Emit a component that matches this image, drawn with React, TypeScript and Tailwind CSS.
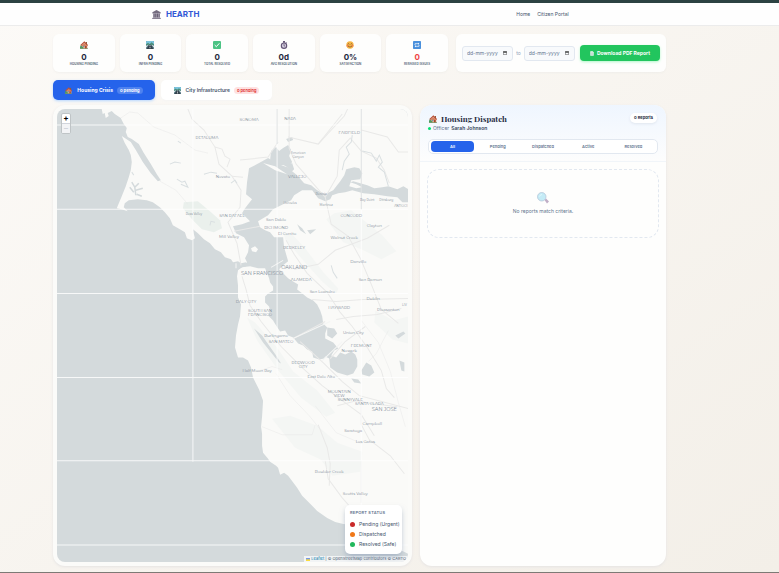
import { useState } from 'react'
import type { ReactNode } from 'react'

type IconProps = { className?: string }

function HouseIcon({ className }: IconProps) {
    return (
        <svg viewBox="0 0 24 24" className={className} aria-hidden="true">
            <path d="M17 3h4v8h-4z" fill="#8d5a3c" />
            <path d="M4 11h18v12H4z" fill="#e2a988" />
            <path d="M13 1 1 12l2 3L13 6l9 9 2-3z" fill="#b9533b" />
            <path d="M13 6 5 14v2h16v-2z" fill="#d9805c" />
            <path d="M15 15h5v8h-5z" fill="#a8482f" />
            <path d="M9 14h4v4H9z" fill="#6a96b8" />
            <path d="M0 23v-6l3-4 4 4 3 2v4z" fill="#4d9a63" />
            <path d="M0 22h24v2H0z" fill="#78946a" />
        </svg>
    )
}

function RoadIcon({ className }: IconProps) {
    return (
        <svg viewBox="0 0 24 24" className={className} aria-hidden="true">
            <rect width="24" height="24" rx="2" fill="#4d6f7c" />
            <path d="M0 2q0-2 2-2h20q2 0 2 2v7H0z" fill="#7cc4dc" />
            <path d="m0 10 6-5 5 4 6-5 7 6v3H0z" fill="#4f8f7c" />
            <path d="M9 11h6l7 13H2z" fill="#35424c" />
            <path d="M11 12h2v3h-2zm0 5h2v5h-2z" fill="#fff" />
            <path d="m0 14 8-3-8 9zm24 0-8-3 8 9z" fill="#dfe9ec" />
        </svg>
    )
}

function CheckIcon({ className }: IconProps) {
    return (
        <svg viewBox="0 0 24 24" className={className} aria-hidden="true">
            <rect width="24" height="24" rx="3" fill="#4cc384" />
            <path d="m5 12 5 5 9-10" fill="none" stroke="#fff" strokeWidth="3" />
        </svg>
    )
}

function StopwatchIcon({ className }: IconProps) {
    return (
        <svg viewBox="0 0 24 24" className={className} aria-hidden="true">
            <path d="M9 0h6v5H9zM18 3l3 3-3 2-2-2z" fill="#665778" />
            <circle cx="12" cy="14" r="8" fill="#d5cfe0" stroke="#665778" strokeWidth="3.500" />
            <path d="M12 9v6h3" fill="none" stroke="#594a6b" strokeWidth="2" />
        </svg>
    )
}

function SmileIcon({ className }: IconProps) {
    return (
        <svg viewBox="0 0 24 24" className={className} aria-hidden="true">
            <circle cx="12" cy="12" r="11" fill="#f6b545" />
            <circle cx="4.500" cy="14" r="3" fill="#f0804d" />
            <circle cx="19.500" cy="14" r="3" fill="#f0804d" />
            <path d="M5 10q2-4 5 0m4 0q2-4 5 0M6 15q6 7 12 0" fill="none" stroke="#6d4326" strokeWidth="2" />
        </svg>
    )
}

function RepeatIcon({ className }: IconProps) {
    return (
        <svg viewBox="0 0 24 24" className={className} aria-hidden="true">
            <rect width="24" height="24" rx="2" fill="#4a90dc" />
            <path d="M6 12V8h10M18 12v4H8" fill="none" stroke="#fff" strokeWidth="2" />
            <path d="m15 5 4 3-4 3zM9 13l-4 3 4 3z" fill="#fff" />
        </svg>
    )
}

function BankIcon({ className }: IconProps) {
    return (
        <svg viewBox="0 0 24 24" className={className} aria-hidden="true">
            <path d="m12 0 11 6v3H1V6z" fill="#756d80" />
            <path d="M3 9h18v11H3z" fill="#b5aebd" />
            <path d="M4 9h3v11H4zm4.500 0h3v11h-3zm4.500 0h3v11h-3zm4.500 0h3v11h-3z" fill="#6b6276" />
            <path d="M2 20h20v2h2v2H0v-2h2z" fill="#8a8294" />
        </svg>
    )
}

function SearchEmoji({ className }: IconProps) {
    return (
        <svg viewBox="0 0 24 24" className={className} aria-hidden="true">
            <path d="m15 16 3-3 6 6-4 4z" fill="#c0aec6" />
            <circle cx="9.500" cy="9.500" r="8.500" fill="#c4ebf6" stroke="#b4c6d8" strokeWidth="1.500" />
            <path d="M5 9q1-4 5-4" fill="none" stroke="#e9f9fd" strokeWidth="1.500" />
        </svg>
    )
}

function CalendarIcon({ className }: IconProps) {
    return (
        <svg viewBox="0 0 12 12" className={className} aria-hidden="true">
            <path d="M1 2h10v9H1zM3 0v3M9 0v3" fill="none" stroke="#333" strokeWidth="1.500" />
            <path d="M1 2h10v3H1z" fill="#333" />
        </svg>
    )
}

function FileIcon({ className }: IconProps) {
    return (
        <svg viewBox="0 0 12 14" className={className} aria-hidden="true">
            <path d="M1 0h7l3 3v11H1z" fill="#f3f6fa" />
            <path d="M3 5h6M3 8h6M3 11h6" stroke="#67a883" strokeWidth="1" />
        </svg>
    )
}

const stats: { label: string; value: string; icon: ReactNode; alert?: boolean }[] = [
    { label: 'Housing Pending', value: '0', icon: <HouseIcon className="size-2" /> },
    { label: 'Infra Pending', value: '0', icon: <RoadIcon className="size-2" /> },
    { label: 'Total Resolved', value: '0', icon: <CheckIcon className="size-2" /> },
    { label: 'Avg Resolution', value: '0d', icon: <StopwatchIcon className="size-2" /> },
    { label: 'Satisfaction', value: '0%', icon: <SmileIcon className="size-2" /> },
    { label: 'Reraised Issues', value: '0', icon: <RepeatIcon className="size-2" />, alert: true },
]

const filters = ['All', 'Pending', 'Dispatched', 'Active', 'Resolved']

const legend = [
    { label: 'Pending (Urgent)', dot: 'bg-[#c92a2a]' },
    { label: 'Dispatched', dot: 'bg-[#f07818]' },
    { label: 'Resolved (Safe)', dot: 'bg-[#22b85c]' },
]

// name, x, y, font size
const places: [string, number, number, number][] = [
    ['SONOMA', 249, 121, 4],
    ['NAPA', 290, 120, 4],
    ['PETALUMA', 207, 139, 4],
    ['FAIRFIELD', 349, 134, 4],
    ['American', 298, 154, 3],
    ['Canyon', 298, 158, 3],
    ['Novato', 223, 178, 4],
    ['VALLEJO', 297, 178, 4],
    ['Benicia', 321, 195, 3],
    ['Hercules', 290, 204, 3],
    ['Martinez', 326, 206, 3],
    ['Bay Point', 367, 201, 3],
    ['Pittsburg', 386, 201, 3],
    ['ANTIOCH', 401, 207, 3],
    ['Ross Valley', 194, 215, 3],
    ['SAN RAFAEL', 232, 217, 4],
    ['CONCORD', 351, 217, 4],
    ['San Pablo', 276, 221, 4],
    ['RICHMOND', 276, 229, 4],
    ['Clayton', 374, 227, 4],
    ['El Cerrito', 287, 235, 4],
    ['Mill Valley', 229, 238, 4],
    ['Walnut Creek', 344, 239, 4],
    ['BERKELEY', 294, 249, 4],
    ['Danville', 358, 263, 4],
    ['OAKLAND', 294, 269, 5],
    ['SAN FRANCISCO', 262, 275, 5],
    ['San Ramon', 370, 281, 4],
    ['ALAMEDA', 301, 281, 4],
    ['San Leandro', 322, 293, 4],
    ['Dublin', 373, 300, 4],
    ['DALY CITY', 246, 303, 4],
    ['HAYWARD', 339, 309, 4],
    ['Pleasanton', 388, 311, 4],
    ['LIV', 404, 306, 3],
    ['SOUTH SAN', 260, 312, 4],
    ['FRANCISCO', 260, 316, 4],
    ['Union City', 353, 334, 4],
    ['Burlingame', 276, 337, 4],
    ['SAN MATEO', 281, 342, 4],
    ['FREMONT', 361, 346, 4],
    ['Newark', 349, 351, 4],
    ['REDWOOD', 303, 363, 4],
    ['CITY', 303, 367, 4],
    ['Half Moon Bay', 257, 371, 4],
    ['East Palo Alto', 321, 377, 4],
    ['MOUNTAIN', 339, 392, 4],
    ['VIEW', 339, 396, 4],
    ['SUNNYVALE', 350, 400, 4],
    ['SANTA CLARA', 369, 404, 4],
    ['SAN JOSE', 384, 410, 5],
    ['Campbell', 372, 424, 4],
    ['Saratoga', 353, 431, 4],
    ['Los Gatos', 365, 442, 4],
    ['Boulder Creek', 329, 472, 4],
    ['Scotts Valley', 355, 494, 4],
]

function CoastMap() {
    return (
        <svg viewBox="57 109 351 452" preserveAspectRatio="xMidYMid slice" className="absolute inset-0 size-full" role="img" aria-label="Map of the Bay Area">
            <path d="M57 109h351v452H57z" fill="#d4dadc" />

            {/* mainland */}
            <path
                d="M102 109 103 114 105 113 106 118 109 116 108 113 112 111 115 114 121 118 124 124 127 128 126 132 128 137 132 139 139 144 144 153 151 164 157 174 161 180 158 181 151 173 143 162 136 150 131 142 125 138 122 136 125 143 129 150 131 155 132 162 131 170 129 177 126 186 122 196 117 208 122 209 128 211 124 207 125 203 129 200 138 199 147 200 153 202 160 207 165 212 170 218 173 225 180 229 185 232 187 238 192 240 195 238 194 234 193 229 198 233 204 239 210 243 215 249 221 252 225 257 231 259 233 262 238 261 241 263 246 262 246 266 242 267 238 270 237 276 238 285 238 297 241 304 240 316 238 324 236 335 235 347 238 357 243 357 248 360 251 367 253 377 259 389 263 400 262 416 261 426 262 433 262 445 263 452 268 458 270 461 276 465 278 467 280 474 284 472 288 475 297 487 302 495 310 503 317 510 327 517 335 521 343 523 357 524 371 527 388 537 398 548 408 553V109z"
                fill="#fafaf8"
            />

            {/* parkland */}
            <g fill="#f4f6f4">
                <path d="m184 202 14-1 12 10 10 9 2 8-8 4-12-3-9-9-10-12z" fill="#eaf0ec" />
                <path d="m283 232 9 2 13 14 18 24 15 16-2 5-14-12-19-21-18-21z" />
                <path d="m326 219 8-6 17-3 10 8 21 17 14 16-15 8-20-10-18-7z" />
                <path d="m247 317 8 5 22 25 16 24 24 19 18 22-9 4-25-19-22-26-22-31z" />
                <path d="m272 418 18-3 27 10 20 17 25 9-2 20-28 4-11-16-26-12z" />
                <path d="m375 310 18 10 15-4v27l-16-4-18-17z" />
            </g>

            {/* bay */}
            <path
                d="M236 270 242 267 250 266 258 268 265 268 267 273 269 278 270 282 273 286 273 290 268 293 265 296 265 302 269 306 270 310 268 315 273 320 276 325 280 331 285 330 288 335 293 337 298 343 303 345 307 349 312 351 313 357 319 359 324 358 325 356 329 358 330 367 337 372 347 375 353 373 357 366 357 359 355 354 351 351 345 354 340 352 336 357 331 355 334 350 338 348 333 342 325 338 325 333 327 327 323 323 322 316 320 310 317 304 313 300 307 297 301 292 297 289 298 284 293 281 288 278 283 273 279 269 283 265 288 261 286 254 284 247 283 237 274 237 270 232 265 230 260 227 258 221 263 218 268 215 273 209 283 204 291 200 294 195 302 190 312 190 318 198 325 201 330 199 332 195 338 193 345 192 352 190 363 193 374 194 387 196 397 197 402 202 408 202V189l-5-3-6 3-9-3-6 1-8 1-7-3-14-4-3 1 6 2 6 3-6 1-7-2 2-6 9-1 2-6-3-5-5-1-8 2-2 6-4 6-7 9-8 4-8-4-6-5-7-2-7-8-10-8-9-3-10-6-9 5-10 5-2 14-1 12 6 5-7 9-3 5 8 8-8 3-9 2 3 7 8 4 5 8-1 7-3 6 2 4z"
                fill="#d4dadc"
            />
            <g fill="#d4dadc">
                <path d="m271 151 5-4 3 4 4-3 5-3 3 5-2 6 3 6-4 5-5-2-8 1-5-6z" />
                <path d="m286 166 6-3 2 6-3 3zM286 139l6-2 1 3-5 2z" />
                <path d="m327 327 7 1 3 5-5 5-5-3zM361 370l5-8 5 3 3 7-5 4-7-2zM351 378l7 1 3 4-7-1zM399 360l5 2v9l-3-1zM395 335l8-4 2 2-7 5z" />
                <path d="m254 328 8 7 14 20 5 8-2-1-16-20zM297 224l5 4 4 6-6-4zM307 230l9-1-6 5z" />
            </g>
            <path d="m132 182 3 5 1 8M135 187l4-4M136 190l7-2M134 192l-4-5M137 194l5 2" fill="none" stroke="#d4dadc" strokeWidth="1.500" />
            <path d="m251 248 4-2 3 3-2 3-4-1zM284 273l12 4 5 6-8-3zM263 163l12 3 12 8-12-4z" fill="#fafaf8" />

            {/* roads and bridges */}
            <g fill="none" stroke="#e9e9e8" strokeWidth="1">
                <path d="M188 109l4 10 12 11 11 17 4 17 13 12 9 14-1 17-12 15 9 21 4 22M215 147l7 2 3 7 5 3-3 8M240 160l28-3 10-15M289 109v39l7 16 21 24 8 9 6 27 17 12 12 22 11 26 10 25 17 14M288 137l30 7 26-28 9-19" />
                <path d="M325 197l12-21 2-26 11-12 11 13 15 7 8 12 5 13M361 130l26 7 11 15h10M318 144l24-30M232 176l11 1M260 226l-26 5M286 240l8 14 13 19 20 19 13 20 12 14 15 21 14 23 5 18 8 9M294 269l24-5 17-14 32-12 22-13M312 299l24 2 27-2 45-1M336 319l17-3 24-2 24-6M242 276l4 13 4 16 11 16 20 25 21 21 20 18 20 15 19 14 13 21M300 341l24 22 18 18 17 14 27 7 22 6M293 338l32-17M330 358l15-17 20-15M337 405l19-5 17 3 24 3M361 400v24l8 15 21 16 14 18M318 424l9 23 3 16-1 22M325 460l3 18 14 19 16 18M361 460v42" />
                <path d="M121 118l9-6 8 1 16 14 21 8 20 15 13 3M160 181l16 9 12 14M361 320l17 22 12 29 8 31 7 24M388 330l-12 23-8 8M276 373l14 22 19 20 13 16M315 405l21 27 26 11M257 371l15-5 10 3M262 426l20 8h30l3-10" strokeWidth="0.500" />
            </g>
            <g fill="none" stroke="#d9dfe1" strokeWidth="1">
                <path d="M342 170l2-9 5-7-3-7 5-5 1-7M362 151l9 2 5 8 3-6 3 7-4 5 6 5 4 14M231 183l4-3 2 3M181 143l-3-2M170 164l5-2 6 1M204 174l7-2 6 1M177 179l5 3 3-1 3 6-7-3M132 172l2 3M331 265l2 7 4 6M210 225l1-4 4 1" />
            </g>
            <path d="M293 338l37-17M236 263v5M271 267l12-7M322 360l20-19" fill="none" stroke="#f4f5f4" strokeWidth="1" />

            {/* tile seams */}
            <path d="M193 109v352M277 109v270M361 209v340M57 125h351M57 209h351M57 293h351M57 377h351M57 460h351M57 544h351" fill="none" stroke="#fff" strokeWidth="1" opacity="0.800" />
            <path d="M361 109v100M277 109v35" stroke="#dfe2e3" strokeWidth="1" />

            <g fill="#7c8996" textAnchor="middle" fontFamily='Montserrat, "Open Sans", sans-serif'>
                {places.map(([name, x, y, size]) => (
                    <text key={name} x={x} y={y} fontSize={size}>{name}</text>
                ))}
            </g>
        </svg>
    )
}

function DateField({ label }: { label: string }) {
    return (
        <div className="flex h-[15px] min-w-0 flex-1 items-center rounded-[3px] border border-slate-200 bg-slate-50 pr-[5px] pl-1">
            <input type="text" aria-label={label} placeholder="dd-mm-yyyy" className="w-full min-w-0 bg-transparent text-[5px] leading-[8px] text-slate-700 outline-none placeholder:text-slate-500" />
            <CalendarIcon className="size-1 shrink-0" />
        </div>
    )
}

export default function App() {
    const [tab, setTab] = useState('housing')
    const [filter, setFilter] = useState('All')

    return (
        <div className="flex min-h-screen flex-col border-t-3 border-b border-t-[#2c4242] border-b-[#7d7a75] bg-linear-to-br from-[#fcfaf7] to-[#f3efe8] font-['Inter','Liberation_Sans',sans-serif] text-slate-800">
            <header className="flex h-[23px] items-center justify-between border-b border-[#ececec] bg-[#fefefe] pr-[27%] pl-[152px]">
                <a href="#" className="flex items-center gap-[5px] text-[8px] leading-3 font-bold text-[#3157d5]">
                    <BankIcon className="size-[9px]" />
                    HEARTH
                </a>
                <nav className="flex items-center gap-[7px] text-[5px] leading-2 text-slate-600">
                    <a href="#">Home</a>
                    <a href="#">Citizen Portal</a>
                </nav>
            </header>

            <main className="flex flex-1 flex-col pt-2 pr-[113px] pb-[6px] pl-[53px]">
                <div className="flex gap-2">
                    <div className="grid min-w-0 flex-1 grid-cols-6 gap-[5px]">
                        {stats.map((s) => (
                            <div key={s.label} className="flex h-[38px] flex-col items-center rounded-md bg-[#fefefd] pt-[7px] shadow-xs shadow-stone-200/40">
                                {s.icon}
                                <div className={`mt-[3px] text-[8px] leading-[10px] font-bold ${s.alert ? 'text-[#ef4444]' : 'text-slate-800'}`}>{s.value}</div>
                                <div className="text-[3px] leading-[5px] font-semibold whitespace-nowrap text-slate-600 uppercase">{s.label}</div>
                            </div>
                        ))}
                    </div>

                    <div className="flex w-[210px] items-center rounded-md bg-[#fefefd] px-[6px] shadow-xs shadow-stone-200/40">
                        <DateField label="From date" />
                        <span className="px-[3px] text-[5px] leading-2 text-slate-400">to</span>
                        <DateField label="To date" />
                        <button className="ml-[5px] flex h-4 w-20 items-center justify-center gap-[3px] rounded-[4px] bg-[#22c55e] text-[5px] leading-2 font-bold whitespace-nowrap text-white shadow-sm shadow-green-200">
                            <FileIcon className="h-[5px] w-1" />
                            Download PDF Report
                        </button>
                    </div>
                </div>

                <div className="mt-2 flex gap-[6px]">
                    <button
                        onClick={() => setTab('housing')}
                        className={`flex h-5 w-[102px] items-center justify-center rounded-[5px] text-[5px] leading-2 font-bold shadow-sm ${tab === 'housing' ? 'bg-[#2563eb] text-white shadow-blue-200' : 'bg-white text-slate-600 shadow-stone-100'}`}
                    >
                        <HouseIcon className="mr-[5px] size-[7px]" />
                        Housing Crisis
                        <span className={`ml-1 rounded-full px-[3px] text-[4px] leading-[7px] ${tab === 'housing' ? 'bg-[#4f82ef]' : 'bg-blue-100 text-blue-700'}`}>0 pending</span>
                    </button>
                    <button
                        onClick={() => setTab('city')}
                        className={`flex h-5 w-[111px] items-center justify-center rounded-[5px] text-[5px] leading-2 font-semibold shadow-sm ${tab === 'city' ? 'bg-[#2563eb] text-white shadow-blue-200' : 'bg-white text-slate-600 shadow-stone-100'}`}
                    >
                        <RoadIcon className="mr-[5px] size-[7px]" />
                        City Infrastructure
                        <span className="ml-1 rounded-full bg-[#fee2e2] px-[3px] text-[4px] leading-[7px] text-[#dc2626]">0 pending</span>
                    </button>
                </div>

                <div className="mt-[5px] flex flex-1 gap-2">
                    <section className="flex min-w-0 flex-[351] rounded-xl bg-[#fbfbf9] p-1 shadow-sm shadow-stone-200">
                        <div className="relative min-h-[452px] flex-1 overflow-hidden rounded-lg">
                            <CoastMap />
                            <div className="absolute top-1 left-1 flex w-[10px] flex-col overflow-hidden rounded-[2px] border border-[#bfc4c6] bg-white text-[8px] leading-[9px] font-bold text-black">
                                <button aria-label="Zoom in" className="h-[10px] border-b border-gray-300">+</button>
                                <button aria-label="Zoom out" className="h-[9px] bg-gray-100 text-gray-300">−</button>
                            </div>
                            <div className="absolute right-0 bottom-0 flex items-center gap-px bg-white/70 px-[2px] text-[4px] leading-[6px] whitespace-nowrap text-slate-600">
                                <svg viewBox="0 0 12 8" className="h-[3px] w-1" aria-hidden="true">
                                    <path d="M0 0h12v4H0z" fill="#4c7be1" />
                                    <path d="M0 4h12v4H0z" fill="#ffd500" />
                                </svg>
                                <a href="#" className="text-[#0078a8]">Leaflet</a>
                                <span>| © OpenStreetMap contributors © CARTO</span>
                            </div>
                            <div className="absolute right-[6px] bottom-2 w-[57px] rounded-[5px] bg-white px-[5px] py-[5px] shadow-md shadow-slate-400/50">
                                <h2 className="text-[4px] leading-[6px] font-semibold tracking-wider text-slate-500">REPORT STATUS</h2>
                                <ul className="mt-[3px] text-[5px] leading-[10px] text-slate-600">
                                    {legend.map((l) => (
                                        <li key={l.label} className="flex items-center gap-1 whitespace-nowrap">
                                            <span className={`size-[5px] shrink-0 rounded-full ${l.dot}`} />
                                            {l.label}
                                        </li>
                                    ))}
                                </ul>
                            </div>
                        </div>
                    </section>

                    <section className="flex min-w-0 flex-[246] flex-col overflow-hidden rounded-xl bg-[#fefefd] shadow-sm shadow-stone-200">
                        <div className="border-b border-slate-100 bg-linear-to-b from-blue-50 to-[#fdfdfd] px-2 pt-2 pb-[7px]">
                            <div className="flex items-start justify-between">
                                <div>
                                    <h1 className="flex items-center gap-1 pl-px font-['Playfair_Display','Liberation_Serif',serif] text-[8px] leading-3 font-bold text-slate-800">
                                        <HouseIcon className="size-2" />
                                        Housing Dispatch
                                    </h1>
                                    <p className="flex items-center text-[5px] leading-[6px] text-slate-500">
                                        <span className="mr-[2px] size-[3px] rounded-full bg-green-400" />
                                        Officer
                                        <strong className="ml-[2px] font-semibold text-slate-700">Sarah Johnson</strong>
                                    </p>
                                </div>
                                <span className="mr-px rounded-full bg-white px-1 text-[4px] leading-[10px] font-bold shadow-sm shadow-slate-200">0 Reports</span>
                            </div>
                            <div className="mt-2 grid grid-cols-5 rounded-[5px] border border-slate-200 bg-white p-px">
                                {filters.map((f) => (
                                    <button
                                        key={f}
                                        onClick={() => setFilter(f)}
                                        className={`mx-px h-[11px] rounded-[4px] text-[4px] leading-[6px] font-semibold ${filter === f ? 'bg-[#2563eb] text-white' : 'text-slate-500'}`}
                                    >
                                        {f}
                                    </button>
                                ))}
                            </div>
                        </div>
                        <div className="p-[7px]">
                            <div className="flex h-[69px] flex-col items-center justify-center gap-[3px] rounded-xl border border-dashed border-slate-200 text-[5px] leading-2 text-slate-500">
                                <SearchEmoji className="size-3" />
                                No reports match criteria.
                            </div>
                        </div>
                    </section>
                </div>
            </main>
        </div>
    )
}
